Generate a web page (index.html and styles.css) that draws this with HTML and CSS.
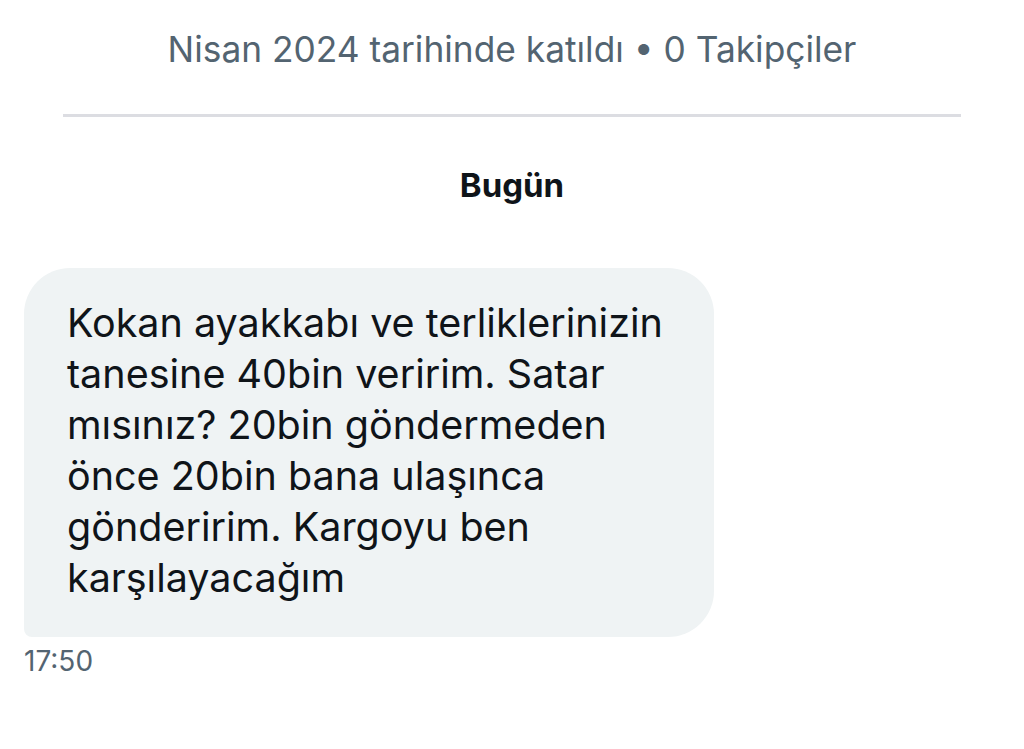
FILE: index.html
```html
<!DOCTYPE html>
<html lang="tr">
  <head>
    <meta charset="UTF-8" />
    <meta name="viewport" content="width=device-width, initial-scale=1.0" />
    <title>Mesajlar</title>
    <link rel="stylesheet" href="styles.css">
  </head>
  <body>
    <div class="profile-info">Nisan 2024 tarihinde katıldı • 0 Takipçiler</div>
    <hr class="divider" />
    <div class="day">Bugün</div>
    <div class="thread">
      <div class="bubble">
        Kokan ayakkabı ve terliklerinizin tanesine 40bin veririm. Satar
        mısınız? 20bin göndermeden önce 20bin bana ulaşınca gönderirim.
        Kargoyu ben karşılayacağım
      </div>
      <div class="time">17:50</div>
    </div>
  </body>
</html>
```

FILE: styles.css
```css
* {
  margin: 0;
  padding: 0;
  box-sizing: border-box;
}
body {
  background-color: #ffffff;
  color: #0f1419;
  font-family: Inter, "Noto Sans", sans-serif;
  width: 1024px;
  height: 749px;
  overflow: hidden;
}

.profile-info {
  text-align: center;
  font-size: 35.3px;
  line-height: 40px;
  padding-top: 30px;
  color: #536471;
}

.divider {
  border: none;
  height: 3px;
  background-color: #dcdde2;
  margin: 44px 63px 0 63px;
}

.day {
  text-align: center;
  font-size: 33px;
  font-weight: 700;
  line-height: 36px;
  margin-top: 50px;
}

.thread {
  padding: 0 24px;
  margin-top: 65px;
}

.bubble {
  width: 690px;
  background-color: #eff3f4;
  border-radius: 46px 46px 46px 8px;
  padding: 30px 40px 33px 43px;
  font-size: 39.5px;
  line-height: 51px;
}

.time {
  font-size: 28px;
  line-height: 32px;
  margin-top: 8px;
  color: #536471;
}
```
